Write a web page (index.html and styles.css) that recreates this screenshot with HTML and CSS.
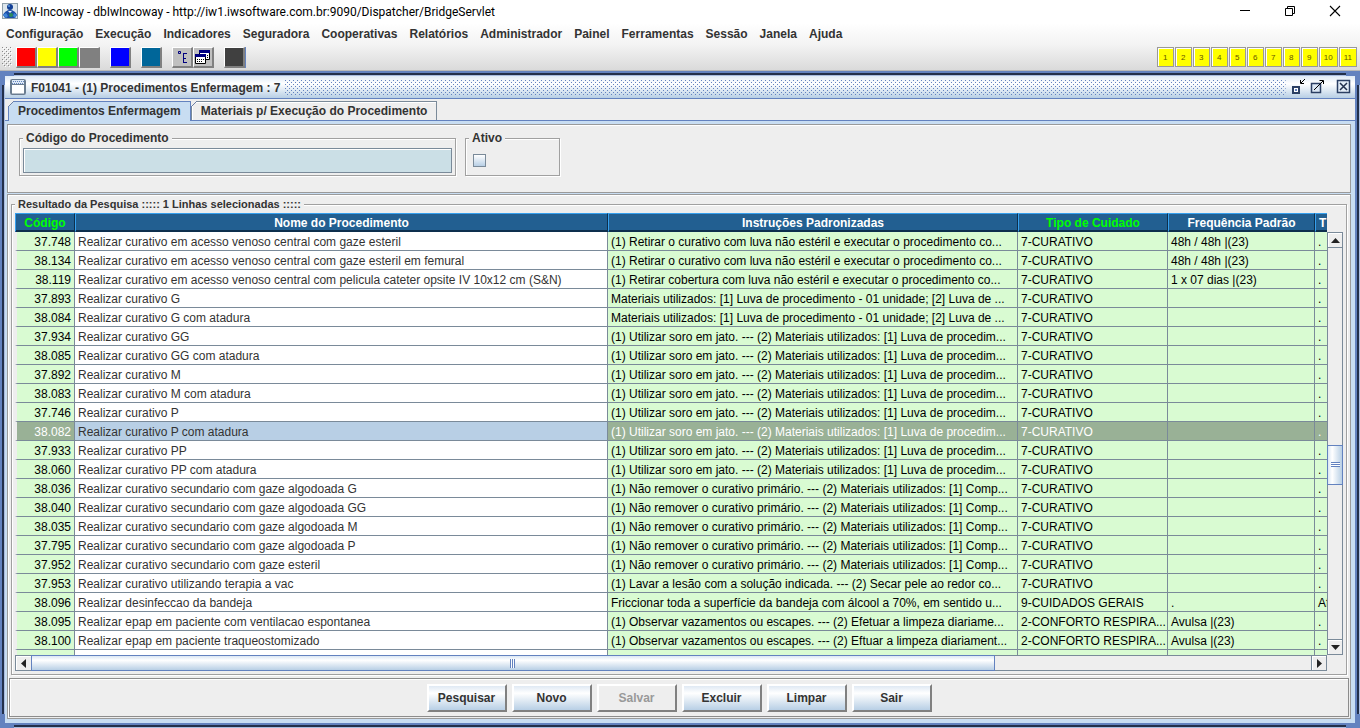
FILE: index.html
```html
<!DOCTYPE html>
<html lang="pt-BR">
<head>
  <meta charset="UTF-8" />
  <meta name="viewport" content="width=device-width, initial-scale=1" />
  <title>IW-Incoway</title>
  <link rel="stylesheet" href="styles.css">
</head>
<body>

<header class="top">
  <div class="titlebar">
    <svg class="app-icon" width="16" height="16" viewBox="0 0 16 16">
      <rect width="16" height="16" fill="#8fa0ac"/>
      <rect x="1" y="1" width="14" height="14" fill="#dde6ec"/>
      <path d="M1 12c1-3 4-5 7-5s6 2 7 5l-2 3H3z" fill="#1b4fa8"/>
      <circle cx="8" cy="4" r="3" fill="#123f95"/>
      <circle cx="7" cy="3" r="1" fill="#5c9be0"/>
      <path d="M1 12l3-2 2 3-2 2zM15 12l-3-2-1 3 2 2z" fill="#3f86d8"/>
      <circle cx="9" cy="12" r="2" fill="#2c8c5a"/>
      <path d="M6 8l2 2 2-2z" fill="#e8f2fa"/>
    </svg>
    <span class="app-title">IW-Incoway - dbIwIncoway - http://iw1.iwsoftware.com.br:9090/Dispatcher/BridgeServlet</span>
    <div class="win-controls">
      <button type="button" aria-label="Minimizar"><svg width="12" height="12" viewBox="0 0 12 12"><path d="M1 5.500h10" stroke="#000"/></svg></button>
      <button type="button" aria-label="Restaurar"><svg width="12" height="12" viewBox="0 0 12 12"><path d="M1.500 3.500h7v7h-7zM3.500 3.500v-2h7v7h-2" fill="none" stroke="#000"/></svg></button>
      <button type="button" aria-label="Fechar"><svg width="12" height="12" viewBox="0 0 12 12"><path d="M1 1l10 10M11 1L1 11" stroke="#000" stroke-width="1.100"/></svg></button>
    </div>
  </div>

  <nav class="menubar">
    <a href="#">Configuração</a>
    <a href="#">Execução</a>
    <a href="#">Indicadores</a>
    <a href="#">Seguradora</a>
    <a href="#">Cooperativas</a>
    <a href="#">Relatórios</a>
    <a href="#">Administrador</a>
    <a href="#">Painel</a>
    <a href="#">Ferramentas</a>
    <a href="#">Sessão</a>
    <a href="#">Janela</a>
    <a href="#">Ajuda</a>
  </nav>

  <div class="toolbar">
    <svg class="grip" width="10" height="20">
      <defs>
        <pattern id="gripDots" width="4" height="4" patternUnits="userSpaceOnUse">
          <rect width="1" height="1" fill="#8a8a8a"/><rect x="1" y="1" width="1" height="1" fill="#fff"/>
          <rect x="2" y="2" width="1" height="1" fill="#8a8a8a"/><rect x="3" y="3" width="1" height="1" fill="#fff"/>
        </pattern>
      </defs>
      <rect width="10" height="20" fill="url(#gripDots)"/>
    </svg>
    <div class="tools">
      <button type="button" class="tool red" aria-label="Vermelho"></button>
      <button type="button" class="tool yellow" aria-label="Amarelo"></button>
      <button type="button" class="tool green" aria-label="Verde"></button>
      <button type="button" class="tool gray" aria-label="Cinza"></button>
    </div>
    <button type="button" class="tool blue" aria-label="Azul"></button>
    <button type="button" class="tool teal" aria-label="Petróleo"></button>
    <div class="tools">
      <button type="button" class="tool silver" aria-label="Árvore">
        <svg width="18" height="18" viewBox="0 0 18 18" fill="none" stroke="#000080"><path d="M5.500 3.500h2v2h-2zM10 5.500h4M10.500 5v10M10 10.500h3M10 14.500h4"/></svg>
      </button>
      <button type="button" class="tool silver" aria-label="Janelas">
        <svg width="18" height="18" viewBox="0 0 18 18"><path d="M5.500 3.500h10v8h-10z" fill="#fff" stroke="#000"/><path d="M5 2h11v3H5z" fill="#000080"/><path d="M1.500 7.500h10v8h-10z" fill="#fff" stroke="#000"/><path d="M1 6h11v3H1z" fill="#000080"/><path d="M3 11.500h8M3 13.500h6M13 7.500h2M13 9.500h2" stroke="#000" stroke-dasharray="1 1"/></svg>
      </button>
    </div>
    <button type="button" class="tool dark" aria-label="Escuro"></button>
    <div class="pages">
      <button type="button">1</button>
      <button type="button">2</button>
      <button type="button">3</button>
      <button type="button">4</button>
      <button type="button">5</button>
      <button type="button">6</button>
      <button type="button">7</button>
      <button type="button">8</button>
      <button type="button">9</button>
      <button type="button">10</button>
      <button type="button">11</button>
    </div>
  </div>
</header>

<main class="frame">
  <div class="edge edge-h"></div>
  <div class="frame-mid">
    <div class="edge edge-v"></div>
    <section class="window">
      <div class="frame-title">
        <svg width="16" height="16" viewBox="0 0 16 16"><rect x=".5" y=".5" width="15" height="15" rx="1" fill="#fff" stroke="#6b7d90"/><path d="M1 1h14v4H1z" fill="#dde9f5"/><path d="M3 2.500h11M2 4.500h11" stroke="#6382bf" stroke-dasharray="1 1"/><path d="M1 5.500h14M1.500 1v14h13V1" fill="none" stroke="#6b7d90"/></svg>
        <h1>F01041 - (1) Procedimentos Enfermagem : 7</h1>
        <svg class="dots" height="15">
          <defs>
            <pattern id="titleDots" width="4" height="4" patternUnits="userSpaceOnUse">
              <rect width="1" height="1" fill="#6382bf"/><rect x="2" y="2" width="1" height="1" fill="#6382bf"/>
            </pattern>
          </defs>
          <rect width="100%" height="15" fill="url(#titleDots)"/>
        </svg>
        <div class="frame-controls">
          <button type="button" aria-label="Iconificar"><svg width="15" height="16" viewBox="0 0 15 16"><path d="M2 8h6v6H2z" fill="#fff" stroke="#2b3f63" stroke-width="2"/><path d="M4 10h2v2H4z" fill="#6382bf"/><path d="M14 0l-4 4M9.500 1v3.500H13" fill="none" stroke="#000"/></svg></button>
          <button type="button" aria-label="Maximizar"><svg width="15" height="16" viewBox="0 0 15 16"><path d="M1.500 4.500h9v9h-9z" fill="#dbe7f4" stroke="#2b3f63" stroke-width="1.500"/><path d="M4 11l9-9M9.500 1.500h4V5" fill="none" stroke="#000"/></svg></button>
          <button type="button" class="close" aria-label="Fechar janela"><svg width="15" height="16" viewBox="0 0 15 16"><rect x="1.500" y="1.500" width="12" height="12" fill="#e3edf7" stroke="#2b3f63" stroke-width="1.500"/><path d="M4 4l7 7M11 4l-7 7" stroke="#22304d" stroke-width="1.500"/></svg></button>
        </div>
      </div>

      <div class="tabs" role="tablist">
        <button type="button" class="tab selected" role="tab" aria-selected="true">Procedimentos Enfermagem</button>
        <button type="button" class="tab" role="tab" aria-selected="false">Materiais p/ Execução do Procedimento</button>
      </div>

      <div class="tab-content">
        <div class="panel search">
          <fieldset class="box box-code">
            <legend><label for="codigo">Código do Procedimento</label></legend>
            <input type="text" id="codigo" />
          </fieldset>
          <fieldset class="box box-active">
            <legend><label for="ativo">Ativo</label></legend>
            <input type="checkbox" id="ativo" />
          </fieldset>
        </div>

        <div class="panel results">
          <fieldset class="box box-results">
            <legend>Resultado da Pesquisa ::::: 1 Linhas selecionadas :::::</legend>
            <div class="grid-area">
              <div class="table-clip">
                <table>
                  <colgroup><col class="c-cod"><col><col class="c-ins"><col class="c-tipo"><col class="c-freq"><col class="c-t"></colgroup>
                  <thead>
                    <tr><th class="key">Código</th><th>Nome do Procedimento</th><th>Instruções Padronizadas</th><th class="key">Tipo de Cuidado</th><th>Frequência Padrão</th><th>T</th></tr>
                  </thead>
                  <tbody>
                    <tr><td>37.748</td><td>Realizar curativo em acesso venoso central com gaze esteril</td><td>(1) Retirar o curativo com luva não estéril e executar o procedimento co...</td><td>7-CURATIVO</td><td>48h / 48h |(23)</td><td>.</td></tr>
                    <tr><td>38.134</td><td>Realizar curativo em acesso venoso central com gaze esteril em femural</td><td>(1) Retirar o curativo com luva não estéril e executar o procedimento co...</td><td>7-CURATIVO</td><td>48h / 48h |(23)</td><td>.</td></tr>
                    <tr><td>38.119</td><td>Realizar curativo em acesso venoso central com pelicula cateter opsite IV 10x12 cm (S&amp;N)</td><td>(1) Retirar cobertura com luva não estéril e executar o procedimento co...</td><td>7-CURATIVO</td><td>1 x 07 dias |(23)</td><td>.</td></tr>
                    <tr><td>37.893</td><td>Realizar curativo G</td><td>Materiais utilizados: [1] Luva de procedimento - 01 unidade; [2] Luva de ...</td><td>7-CURATIVO</td><td></td><td>.</td></tr>
                    <tr><td>38.084</td><td>Realizar curativo G com atadura</td><td>Materiais utilizados: [1] Luva de procedimento - 01 unidade; [2] Luva de ...</td><td>7-CURATIVO</td><td></td><td>.</td></tr>
                    <tr><td>37.934</td><td>Realizar curativo GG</td><td>(1) Utilizar soro em jato. --- (2) Materiais utilizados: [1] Luva de procedim...</td><td>7-CURATIVO</td><td></td><td>.</td></tr>
                    <tr><td>38.085</td><td>Realizar curativo GG com atadura</td><td>(1) Utilizar soro em jato. --- (2) Materiais utilizados: [1] Luva de procedim...</td><td>7-CURATIVO</td><td></td><td>.</td></tr>
                    <tr><td>37.892</td><td>Realizar curativo M</td><td>(1) Utilizar soro em jato. --- (2) Materiais utilizados: [1] Luva de procedim...</td><td>7-CURATIVO</td><td></td><td>.</td></tr>
                    <tr><td>38.083</td><td>Realizar curativo M com atadura</td><td>(1) Utilizar soro em jato. --- (2) Materiais utilizados: [1] Luva de procedim...</td><td>7-CURATIVO</td><td></td><td>.</td></tr>
                    <tr><td>37.746</td><td>Realizar curativo P</td><td>(1) Utilizar soro em jato. --- (2) Materiais utilizados: [1] Luva de procedim...</td><td>7-CURATIVO</td><td></td><td>.</td></tr>
                    <tr class="current"><td>38.082</td><td>Realizar curativo P com atadura</td><td>(1) Utilizar soro em jato. --- (2) Materiais utilizados: [1] Luva de procedim...</td><td>7-CURATIVO</td><td></td><td>.</td></tr>
                    <tr><td>37.933</td><td>Realizar curativo PP</td><td>(1) Utilizar soro em jato. --- (2) Materiais utilizados: [1] Luva de procedim...</td><td>7-CURATIVO</td><td></td><td>.</td></tr>
                    <tr><td>38.060</td><td>Realizar curativo PP com atadura</td><td>(1) Utilizar soro em jato. --- (2) Materiais utilizados: [1] Luva de procedim...</td><td>7-CURATIVO</td><td></td><td>.</td></tr>
                    <tr><td>38.036</td><td>Realizar curativo secundario com gaze algodoada G</td><td>(1) Não remover o curativo primário. --- (2) Materiais utilizados: [1] Comp...</td><td>7-CURATIVO</td><td></td><td>.</td></tr>
                    <tr><td>38.040</td><td>Realizar curativo secundario com gaze algodoada GG</td><td>(1) Não remover o curativo primário. --- (2) Materiais utilizados: [1] Comp...</td><td>7-CURATIVO</td><td></td><td>.</td></tr>
                    <tr><td>38.035</td><td>Realizar curativo secundario com gaze algodoada M</td><td>(1) Não remover o curativo primário. --- (2) Materiais utilizados: [1] Comp...</td><td>7-CURATIVO</td><td></td><td>.</td></tr>
                    <tr><td>37.795</td><td>Realizar curativo secundario com gaze algodoada P</td><td>(1) Não remover o curativo primário. --- (2) Materiais utilizados: [1] Comp...</td><td>7-CURATIVO</td><td></td><td>.</td></tr>
                    <tr><td>37.952</td><td>Realizar curativo secundario com gaze esteril</td><td>(1) Não remover o curativo primário. --- (2) Materiais utilizados: [1] Comp...</td><td>7-CURATIVO</td><td></td><td>.</td></tr>
                    <tr><td>37.953</td><td>Realizar curativo utilizando terapia a vac</td><td>(1) Lavar a lesão com a solução indicada. --- (2) Secar pele ao redor co...</td><td>7-CURATIVO</td><td></td><td>.</td></tr>
                    <tr><td>38.096</td><td>Realizar desinfeccao da bandeja</td><td>Friccionar toda a superfície da bandeja com álcool a 70%, em sentido u...</td><td>9-CUIDADOS GERAIS</td><td>.</td><td>Af</td></tr>
                    <tr><td>38.095</td><td>Realizar epap em paciente com ventilacao espontanea</td><td>(1) Observar vazamentos ou escapes. --- (2) Efetuar a limpeza diariame...</td><td>2-CONFORTO RESPIRA...</td><td>Avulsa |(23)</td><td>.</td></tr>
                    <tr><td>38.100</td><td>Realizar epap em paciente traqueostomizado</td><td>(1) Observar vazamentos ou escapes. --- (2) Eftuar a limpeza diariament...</td><td>2-CONFORTO RESPIRA...</td><td>Avulsa |(23)</td><td>.</td></tr>
                    <tr><td></td><td></td><td></td><td></td><td></td><td></td></tr>
                  </tbody>
                </table>
              </div>
              <div class="scroll scroll-v">
                <button type="button" aria-label="Rolar para cima"><svg width="9" height="5" viewBox="0 0 9 5"><path d="M4.500 0L9 5H0z" fill="#222"/></svg></button>
                <div class="before"></div>
                <div class="thumb"><span class="ridges"></span></div>
                <div class="after"></div>
                <button type="button" aria-label="Rolar para baixo"><svg width="9" height="5" viewBox="0 0 9 5"><path d="M4.500 5L9 0H0z" fill="#222"/></svg></button>
              </div>
              <div class="scroll scroll-h">
                <button type="button" aria-label="Rolar para a esquerda"><svg width="5" height="9" viewBox="0 0 5 9"><path d="M0 4.500L5 0v9z" fill="#222"/></svg></button>
                <div class="thumb"><span class="ridges"></span></div>
                <div class="after"></div>
                <button type="button" aria-label="Rolar para a direita"><svg width="5" height="9" viewBox="0 0 5 9"><path d="M5 4.500L0 0v9z" fill="#222"/></svg></button>
              </div>
            </div>
          </fieldset>

          <div class="actions">
            <button type="button">Pesquisar</button>
            <button type="button">Novo</button>
            <button type="button" disabled>Salvar</button>
            <button type="button">Excluir</button>
            <button type="button">Limpar</button>
            <button type="button">Sair</button>
          </div>
        </div>
      </div>
    </section>
    <div class="edge edge-v"></div>
  </div>
  <div class="edge edge-h"></div>
</main>

</body>
</html>
```

FILE: styles.css
```css
* {
  box-sizing: border-box;
}
body {
  margin: 0;
  height: 100vh;
  display: flex;
  flex-direction: column;
  overflow: hidden;
  font-family: "Liberation Sans", Arial, sans-serif;
  font-size: 12px;
  color: #333;
  background: #6382bf;
}
button {
  margin: 0;
  padding: 0;
  border: none;
  background: none;
  font: inherit;
  color: inherit;
}
svg {
  display: block;
  flex: none;
}

/* application window */
.titlebar {
  display: flex;
  align-items: center;
  height: 23px;
  padding: 0 19px 2px 2px;
  background: #fff;
}
.app-title {
  flex: 1;
  margin-left: 5px;
  padding-top: 2px;
  font-family: Roboto, "Open Sans", sans-serif;
  color: #000;
  white-space: nowrap;
}
.win-controls {
  display: flex;
  gap: 33px;
}
.menubar {
  display: flex;
  align-items: center;
  gap: 12px;
  height: 22px;
  padding-left: 6px;
  background: linear-gradient(#fff, #f3f3f3);
}
.menubar a {
  color: #333;
  font-weight: bold;
  text-decoration: none;
}
.toolbar {
  display: flex;
  align-items: center;
  gap: 10px;
  height: 26px;
  padding: 0 3px 1px 2px;
  background: linear-gradient(#f3f3f3, #dadada);
  border-bottom: 1px solid #b8b8b8;
}
.grip {
  margin-right: -6px;
}
.tools {
  display: flex;
}
.tool {
  width: 21px;
  height: 21px;
  border: 1px solid #fff;
  border-right: 2px solid #808080;
  border-bottom: 2px solid #808080;
}
.red { background: #f00; }
.yellow { background: #ff0; }
.green { background: #0f0; }
.gray { background: #808080; }
.blue { background: #00f; }
.teal { background: #006699; }
.silver { background: #c0c0c0; }
.dark {
  background: #404040;
  box-shadow: 1px 0 #6382bf;
}
.pages {
  display: flex;
  gap: 1px;
  margin-left: auto;
}
.pages button {
  min-width: 17px;
  height: 20px;
  padding: 0 4px;
  border: 1px solid #999;
  box-shadow: inset 1px 1px #fff;
  background: #ff0;
  font-size: 8px;
  color: #665500;
}

/* internal frame */
.frame {
  flex: 1;
  min-height: 0;
  display: flex;
  flex-direction: column;
}
.edge-h {
  height: 5px;
  padding: 2px 14px 0;
}
.edge-h::before {
  content: "";
  display: block;
  height: 2px;
  background: #222f4a;
  border-bottom: 1px solid #a9bcdf;
}
.edge-v {
  flex: none;
  width: 5px;
  padding: 9px 1px 9px 2px;
}
.edge-v::before {
  content: "";
  display: block;
  width: 2px;
  height: 100%;
  background: #222f4a;
  border-right: 1px solid #a9bcdf;
}
.frame-mid {
  flex: 1;
  min-height: 0;
  display: flex;
}
.window {
  flex: 1;
  min-width: 0;
  display: flex;
  flex-direction: column;
  background: #eee;
}
.frame-title {
  display: flex;
  align-items: center;
  height: 23px;
  padding: 0 4px 0 5px;
  background: linear-gradient(#dfeaf6, #fff 35%, #b8cfe5);
  border-bottom: 1px solid #6382bf;
}
.frame-title h1 {
  margin: 0 5px;
  padding-top: 1px;
  font-size: 12px;
  white-space: nowrap;
}
.dots {
  flex: 1;
  min-width: 0;
}
.frame-controls {
  display: flex;
  gap: 4px;
  margin-left: 5px;
}
.close {
  margin-left: 7px;
}

.tabs {
  display: flex;
  align-items: flex-end;
  height: 22px;
  padding-left: 3px;
  border-bottom: 1px solid #6382bf;
}
.tab {
  position: relative;
  height: 19px;
  padding: 0 9px;
  border: 1px solid #7a8a99;
  border-bottom: none;
  box-shadow: inset 1px 1px #fff;
  font-weight: bold;
  white-space: nowrap;
}
.tab.selected {
  height: 20px;
  margin-bottom: -1px;
  padding-bottom: 1px;
  background: #c8ddf2;
  border-color: #6382bf;
  box-shadow: none;
}
.tab::before {
  content: "";
  position: absolute;
  left: -1px;
  top: -1px;
  width: 6px;
  height: 6px;
  background: linear-gradient(135deg, #eee 42%, #6b7fa5 42%, #6b7fa5 56%, transparent 56%);
}
.tab-content {
  flex: 1;
  min-height: 0;
  display: flex;
  flex-direction: column;
  gap: 1px;
  padding: 3px 4px 4px 2px;
  background: #c8ddf2;
}
.panel {
  background: #eee;
  border: 1px solid #9a9a9a;
  box-shadow: inset 1px 1px #fff;
}

/* etched boxes */
.box {
  min-width: 0;
  margin: 0;
  border: 1px solid #a0a0a0;
  box-shadow: 1px 1px #fff, inset 1px 1px #fff;
}
.box legend {
  padding: 0 3px;
  line-height: 14px;
  font-weight: bold;
  background: #eee;
}
.search {
  display: flex;
  align-items: flex-start;
  gap: 9px;
  height: 69px;
  padding: 6px 11px;
}
.box-code {
  width: 437px;
  height: 45px;
  padding: 3px;
}
.box-code input {
  display: block;
  width: 100%;
  height: 25px;
  padding: 0 4px;
  border: 1px solid #7a8a99;
  box-shadow: inset 1px 1px #fff;
  background: #cbdfe6;
  font: inherit;
}
.box-active {
  width: 95px;
  height: 45px;
  padding: 9px 7px;
}
.box-active legend {
  margin-left: -4px;
}
.box-active input {
  appearance: none;
  display: block;
  width: 13px;
  height: 13px;
  margin: 0;
  border: 1px solid #7a8a99;
  background: linear-gradient(#fff, #b8cfe5);
}

.results {
  flex: 1;
  min-height: 0;
  display: flex;
  flex-direction: column;
  gap: 3px;
  padding: 2px 1px 1px;
}
.box-results {
  flex: 1;
  min-height: 0;
  margin: 0 2px;
  padding: 2px 3px 3px;
}
.box-results legend {
  font-size: 11px;
}
.grid-area {
  display: grid;
  grid-template-columns: minmax(0, 1fr) 16px;
  grid-template-rows: minmax(0, 1fr) 16px;
  height: 100%;
}
.table-clip {
  overflow: hidden;
}
table {
  width: 100%;
  table-layout: fixed;
  border-collapse: separate;
  border-spacing: 0;
}
.c-cod { width: 60px; }
.c-ins { width: 410px; }
.c-tipo { width: 150px; }
.c-freq { width: 147px; }
.c-t { width: 12px; }
th,
td {
  height: 19px;
  padding: 2px 3px 0;
  line-height: 16px;
  overflow: hidden;
  white-space: nowrap;
}
th {
  line-height: 15px;
  color: #fff;
  background: #225f91;
  border: 1px solid #36a0ee;
  border-right-color: #0d2f4d;
  border-bottom-color: #0d2f4d;
  box-shadow: inset 0 -1px #0d2f4d;
}
th.key {
  color: #0f0;
}
td {
  color: #000;
  background: #d9fbd2;
  border-right: 1px solid #7a8a99;
  border-bottom: 1px solid #7a8a99;
}
td:first-child {
  text-align: right;
  border-left: 2px solid #eee;
}
td:nth-child(2) {
  color: #333;
  background: #fff;
}
td:last-child,
th:last-child {
  border-right: none;
}
.current td {
  color: #fff;
  background: #99b196;
}
.current td:nth-child(2) {
  color: #333;
  background: #b8cfe5;
}

/* scroll bars */
.scroll {
  display: flex;
  background: #eee;
  border: 1px solid #7a8a99;
}
.scroll button {
  flex: none;
  display: flex;
  align-items: center;
  justify-content: center;
  box-shadow: inset 1px 1px #fff;
}
.scroll-v {
  flex-direction: column;
  margin-top: 19px;
}
.scroll-v button {
  height: 15px;
}
.scroll-v button:first-child {
  border-bottom: 1px solid #7a8a99;
}
.scroll-v button:last-child {
  border-top: 1px solid #7a8a99;
}
.scroll-v .before { flex: 197; }
.scroll-v .after { flex: 154; }
.scroll-h button {
  width: 15px;
}
.scroll-h button:last-child {
  border-left: 1px solid #7a8a99;
}
.thumb {
  display: flex;
  align-items: center;
  justify-content: center;
  border: 1px solid #6382bf;
}
.scroll-v .thumb {
  flex: 39;
  margin: 0 -1px;
  background: linear-gradient(90deg, #dbe7f4, #fff 30%, #b8cfe5);
}
.scroll-h .thumb {
  flex: 965;
  margin: -1px 0;
  background: linear-gradient(#dbe7f4, #fff 30%, #b8cfe5);
}
.scroll-h .after { flex: 317; }
.scroll-v .ridges {
  width: 9px;
  height: 5px;
  background: repeating-linear-gradient(#6382bf 0 1px, #fff 1px 2px);
}
.scroll-h .ridges {
  width: 5px;
  height: 9px;
  background: repeating-linear-gradient(90deg, #6382bf 0 1px, #fff 1px 2px);
}

.actions {
  display: flex;
  justify-content: center;
  gap: 5px;
  padding: 5px 0 4px;
  border: 1px solid #8c8c8c;
  box-shadow: inset 1px 1px #fff;
}
.actions button {
  width: 80px;
  height: 28px;
  border: 2px solid #fff;
  border-right-color: #808080;
  border-bottom-color: #808080;
  background: linear-gradient(#dfe9f4, #fff 30%, #b8cfe5);
  font-weight: bold;
}
.actions button:disabled {
  color: #999;
  background: #eee;
}
```
